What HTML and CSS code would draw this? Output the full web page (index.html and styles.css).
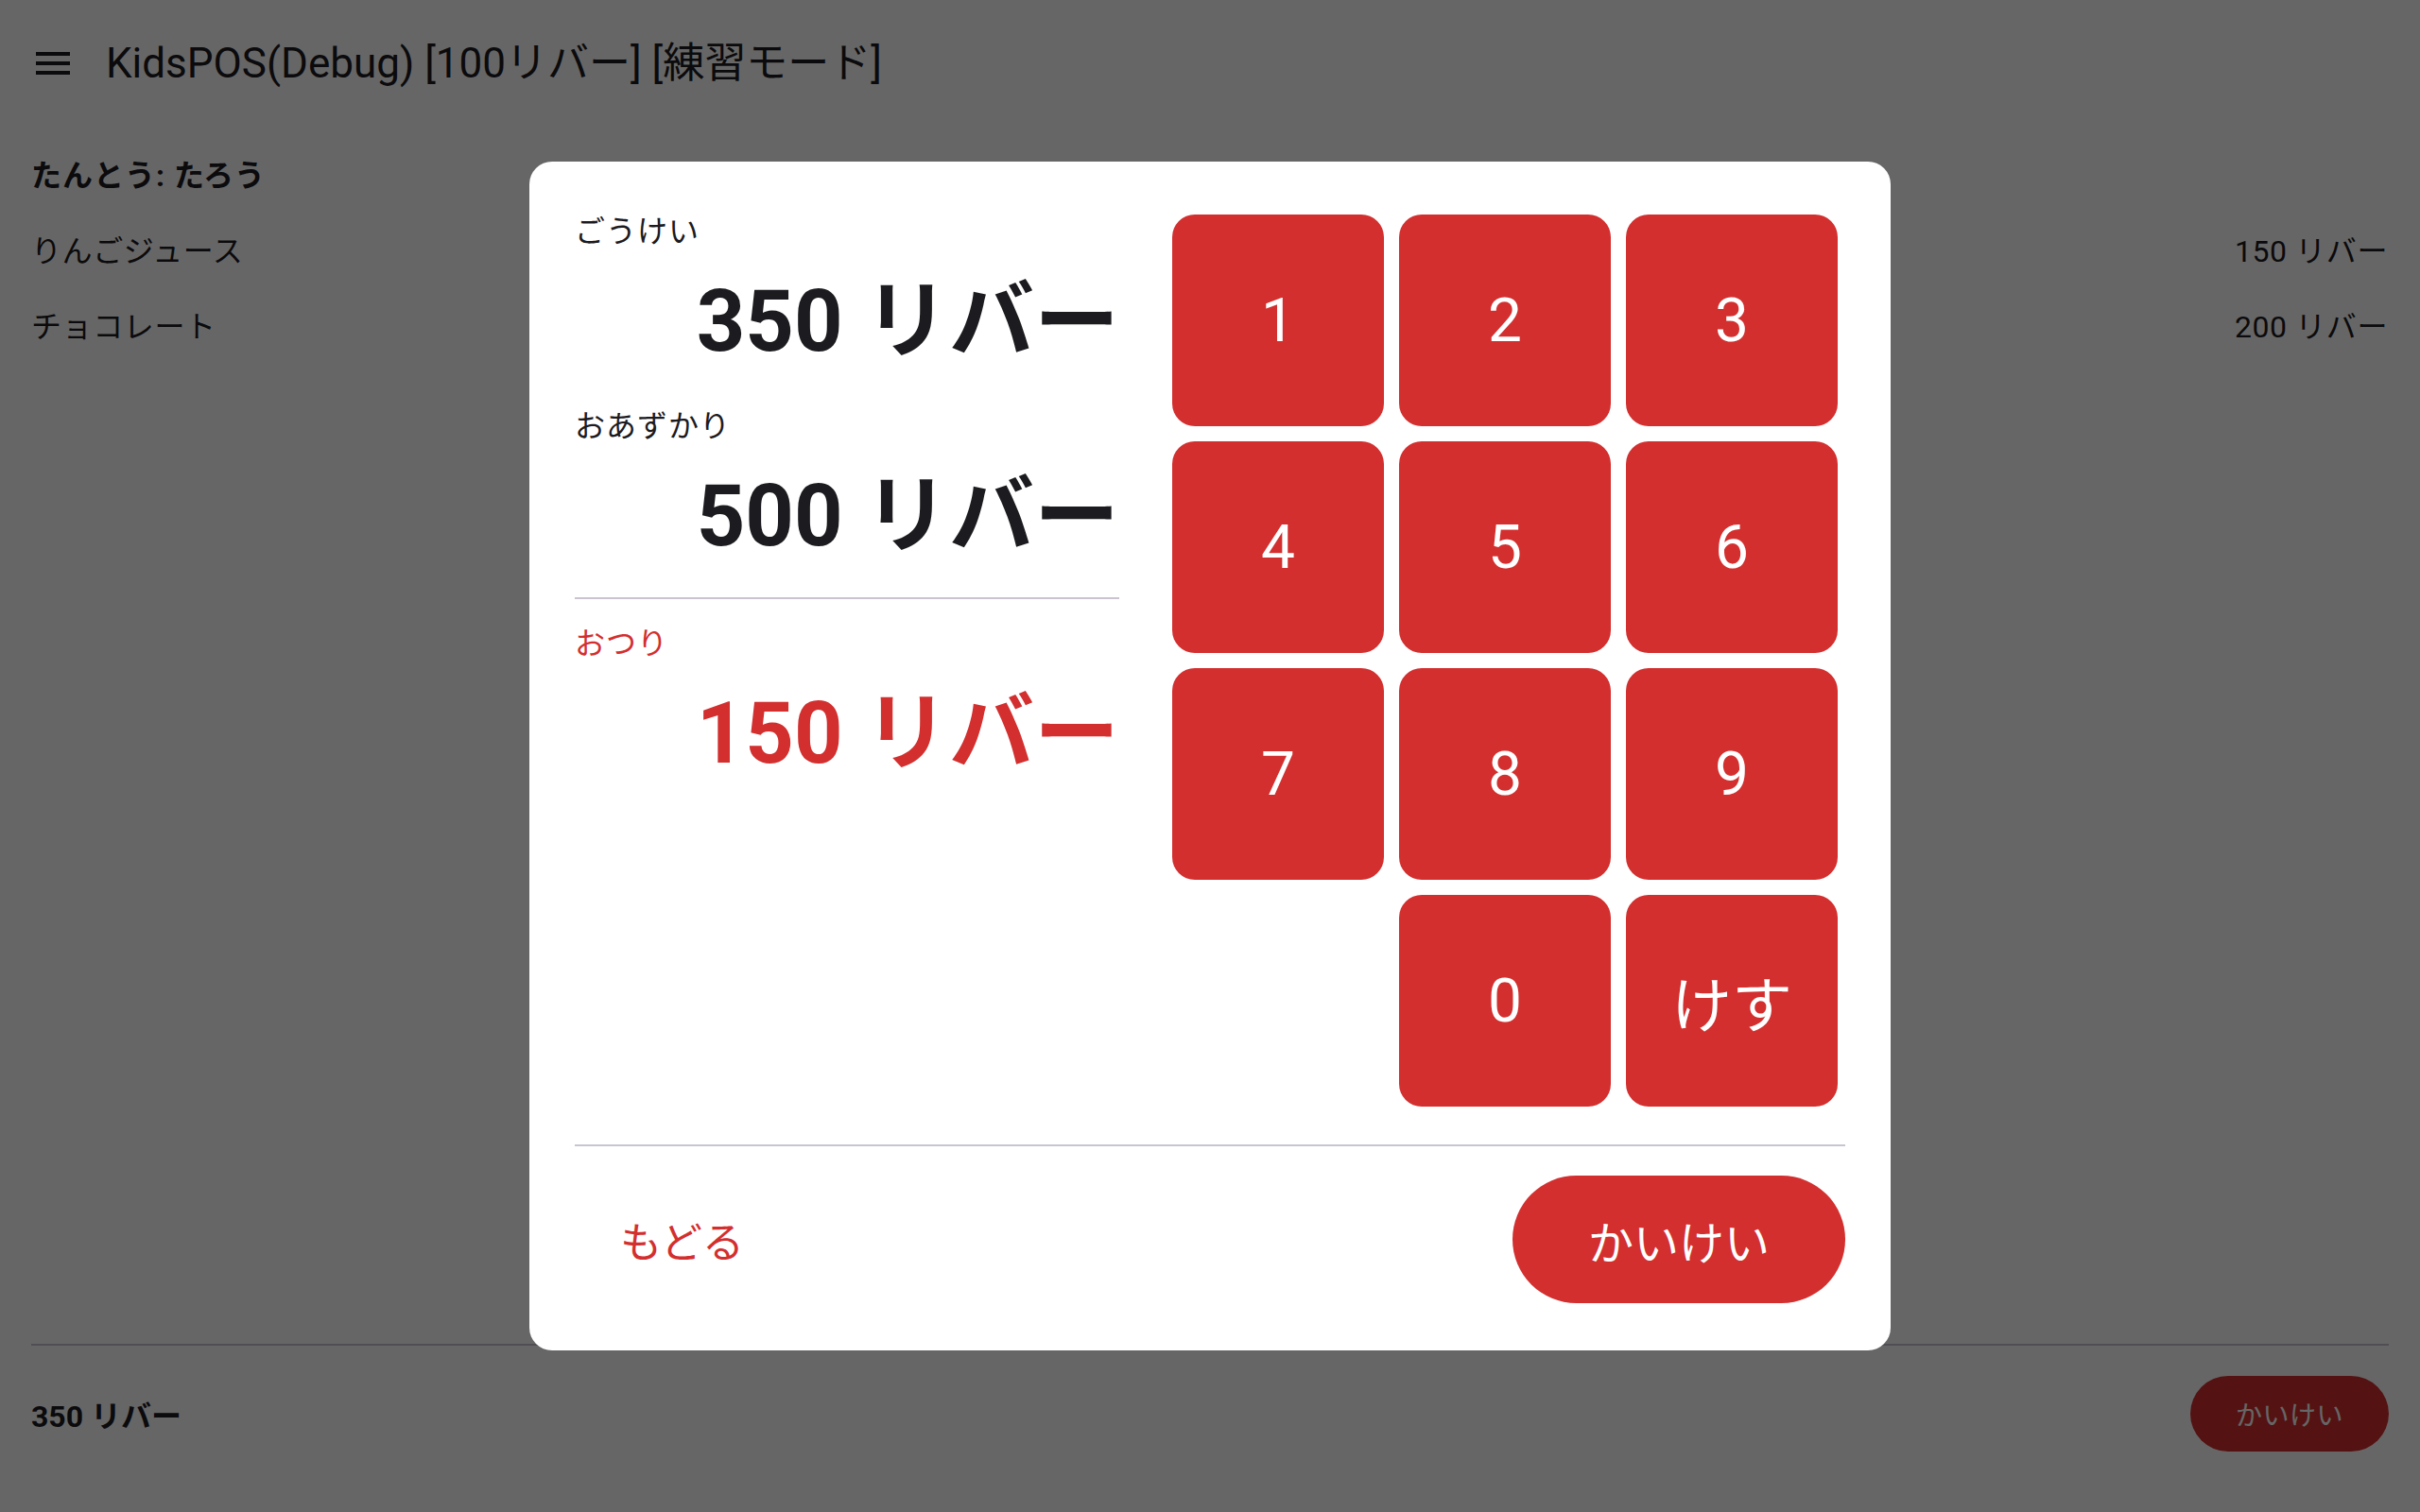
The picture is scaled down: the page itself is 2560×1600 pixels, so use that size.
FILE: index.html
```html
<!DOCTYPE html>
<html lang="ja">
<head>
<meta charset="utf-8">
<title>KidsPOS</title>
<link rel="stylesheet" href="styles.css">
</head>
<body>
<div class="screen">
  <header class="topbar">
    <svg class="menu-icon" viewBox="0 0 24 24" aria-hidden="true"><path d="M3 18h18v-2H3v2zm0-5h18v-2H3v2zm0-7v2h18V6H3z"/></svg>
    <h1 class="title">KidsPOS(Debug) [100リバー] [練習モード]</h1>
  </header>
  <main class="sale">
    <p class="staff">たんとう: たろう</p>
    <ul class="items">
      <li class="item"><span>りんごジュース</span><span>150 リバー</span></li>
      <li class="item"><span>チョコレート</span><span>200 リバー</span></li>
    </ul>
  </main>
  <footer class="checkout">
    <div class="total">350 リバー</div>
    <button class="pay-btn">かいけい</button>
  </footer>
</div>

<div class="scrim">
  <div class="dialog">
    <div class="dialog-body">
      <div class="summary">
        <div class="group">
          <div class="label">ごうけい</div>
          <div class="amount">350 リバー</div>
        </div>
        <div class="group">
          <div class="label">おあずかり</div>
          <div class="amount">500 リバー</div>
        </div>
        <div class="group change">
          <div class="label">おつり</div>
          <div class="amount">150 リバー</div>
        </div>
      </div>
      <div class="keypad">
        <button class="key">1</button>
        <button class="key">2</button>
        <button class="key">3</button>
        <button class="key">4</button>
        <button class="key">5</button>
        <button class="key">6</button>
        <button class="key">7</button>
        <button class="key">8</button>
        <button class="key">9</button>
        <button class="key key-zero">0</button>
        <button class="key key-clear">けす</button>
      </div>
    </div>
    <div class="dialog-actions">
      <button class="text-btn">もどる</button>
      <button class="confirm-btn">かいけい</button>
    </div>
  </div>
</div>
</body>
</html>
```
FILE: styles.css
```css
* {
  box-sizing: border-box;
}

html, body {
  margin: 0;
  padding: 0;
}

body {
  width: 2560px;
  height: 1600px;
  overflow: hidden;
  background: #ffffff;
  color: #1c1b1f;
  font-family: Roboto, "Noto Sans CJK JP", sans-serif;
}

button {
  font-family: inherit;
  border: none;
  cursor: pointer;
}

/* ---------- sale screen ---------- */

.screen {
  height: 1600px;
  display: flex;
  flex-direction: column;
}

.topbar {
  height: 128px;
  display: flex;
  align-items: center;
  padding-left: 32px;
  padding-top: 5px;
  gap: 32px;
  flex: none;
}

.menu-icon {
  width: 48px;
  height: 48px;
  fill: #1c1b1f;
}

.title {
  margin: 0;
  font-size: 44px;
  font-weight: 400;
  line-height: 56px;
  white-space: nowrap;
}

.sale {
  flex: 1;
  padding: 34px 34px 0 33px;
}

.staff {
  margin: 0;
  font-size: 32px;
  font-weight: 700;
  line-height: 48px;
  letter-spacing: 1px;
}

.items {
  list-style: none;
  margin: 32px 0 0;
  padding: 0;
  display: flex;
  flex-direction: column;
  gap: 32px;
}

.item {
  display: flex;
  justify-content: space-between;
  font-size: 32px;
  line-height: 48px;
  letter-spacing: 0.6px;
}

.checkout {
  flex: none;
  margin: 0 33px;
  border-top: 2px solid #cac4d0;
  padding: 32px 0 64px;
  display: flex;
  justify-content: space-between;
  align-items: center;
}

.total {
  font-size: 32px;
  font-weight: 700;
}

.pay-btn {
  height: 80px;
  padding: 0 48px;
  border-radius: 40px;
  background: #d32f2f;
  color: #ffffff;
  font-size: 28px;
  letter-spacing: 0.5px;
}

/* ---------- payment dialog ---------- */

.scrim {
  position: fixed;
  inset: 0;
  background: rgba(0, 0, 0, 0.6);
  display: flex;
  align-items: center;
  justify-content: center;
}

.dialog {
  width: 1440px;
  padding: 48px 48px 50px;
  background: #ffffff;
  border-radius: 24px;
}

.dialog-body {
  display: flex;
  gap: 48px;
}

.summary {
  width: 576px;
  flex: none;
  padding-top: 2px;
}

.group {
  margin-bottom: 16px;
}

.group + .group {
  margin-bottom: 0;
}

.group.change {
  margin-top: 15px;
  border-top: 2px solid #cac4d0;
  padding-top: 23px;
}

.label {
  font-size: 32px;
  line-height: 48px;
  letter-spacing: 1px;
}

.amount {
  font-size: 90px;
  font-weight: 700;
  line-height: 140px;
  padding-top: 2px;
  text-align: right;
  white-space: nowrap;
}

.change .label,
.change .amount {
  color: #d32f2f;
}

.keypad {
  display: grid;
  grid-template-columns: repeat(3, 240px);
  grid-auto-rows: 240px;
}

.key {
  margin: 8px;
  border-radius: 24px;
  background: #d32f2f;
  color: #ffffff;
  font-size: 64px;
  font-weight: 400;
  display: flex;
  align-items: center;
  justify-content: center;
}

.key-zero {
  grid-column-start: 2;
}

.dialog-actions {
  margin-top: 32px;
  border-top: 2px solid #cac4d0;
  padding-top: 31px;
  display: flex;
  justify-content: space-between;
  align-items: center;
}

.text-btn {
  height: 135px;
  padding: 0 48px;
  background: transparent;
  color: #d32f2f;
  font-size: 44px;
}

.confirm-btn {
  width: 352px;
  height: 135px;
  border-radius: 68px;
  background: #d32f2f;
  color: #ffffff;
  font-size: 48px;
}
```
